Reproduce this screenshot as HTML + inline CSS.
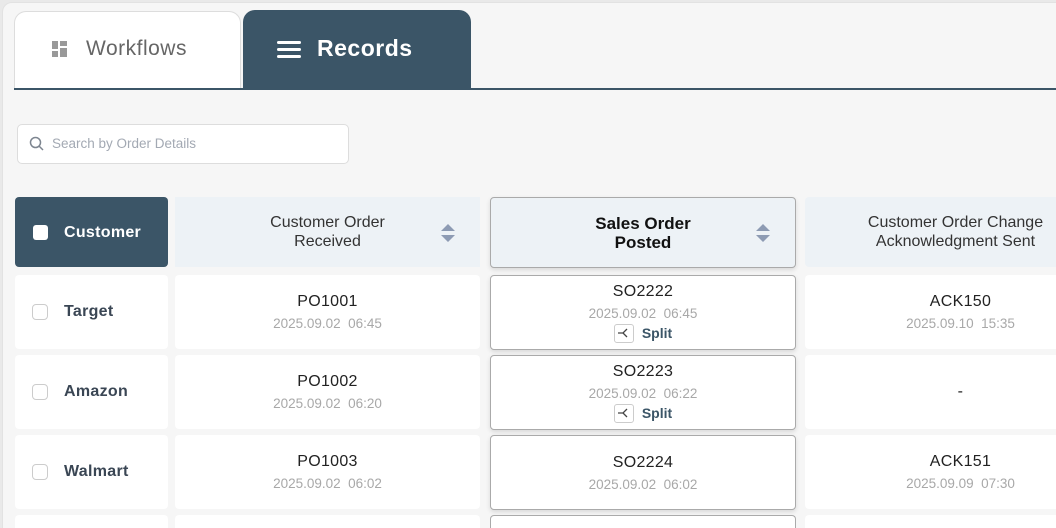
<!DOCTYPE html><html><head><style>
*{box-sizing:border-box;margin:0;padding:0}
html,body{width:1056px;height:528px;overflow:hidden}
body{background:#e9e9e9;font-family:"Liberation Sans",sans-serif;position:relative}
.frame{position:absolute;left:2px;top:2px;width:1054px;height:526px;background:#f6f6f6;border-radius:10px 0 0 0;border:1px solid #e2e2e2;border-right:none;border-bottom:none}
.abs{position:absolute}
.c{display:flex;flex-direction:column;align-items:center;justify-content:center;text-align:center}
.cell{background:#fff;border-radius:4px}
.hd{background:#edf2f6}
.id{font-size:16px;color:#222;letter-spacing:.3px}
.dt{font-size:13.5px;color:#a8a8a8;margin-top:5px}
.so{background:#fff;border:1px solid #aaa;border-radius:4px;box-shadow:0 2px 5px rgba(0,0,0,.12)}
.name{font-size:16px;font-weight:bold;color:#3a4654;letter-spacing:.3px}
.cb{width:16px;height:16px;border:1px solid #ccc;border-radius:4px;background:#fff}
.split{display:flex;align-items:center;gap:8px;margin-top:3px;font-size:14px;font-weight:bold;color:#3b5567}
.si{width:20px;height:19px;border:1px solid #ccc;border-radius:3px;display:flex;align-items:center;justify-content:center}
</style></head><body>
<div class="frame"></div>
<div class="abs" style="left:14px;top:11px;width:227px;height:78px;background:#fff;border:1px solid #ddd;border-bottom:none;border-radius:12px 12px 0 0"></div>
<div class="abs" style="left:52px;top:41px;width:16px;height:16px">
<div class="abs" style="left:0;top:0;width:6px;height:8px;background:#999"></div><div class="abs" style="left:8px;top:0;width:7px;height:5px;background:#999"></div><div class="abs" style="left:0;top:10px;width:6px;height:6px;background:#999"></div><div class="abs" style="left:8px;top:7px;width:7px;height:9px;background:#999"></div></div>
<div class="abs" style="left:86px;top:37px;font-size:21px;color:#666;letter-spacing:.5px">Workflows</div>
<div class="abs" style="left:243px;top:10px;width:228px;height:79px;background:#3b5567;border-radius:12px 12px 0 0"></div>
<div class="abs" style="left:277px;top:41px;width:24px;height:3px;background:#fff;border-radius:2px"></div>
<div class="abs" style="left:277px;top:48px;width:24px;height:3px;background:#fff;border-radius:2px"></div>
<div class="abs" style="left:277px;top:55px;width:24px;height:3px;background:#fff;border-radius:2px"></div>
<div class="abs" style="left:317px;top:35px;font-size:23px;font-weight:bold;color:#fff;letter-spacing:.5px">Records</div>
<div class="abs" style="left:14px;top:88px;width:1042px;height:2px;background:#3b5567"></div>
<div class="abs" style="left:17px;top:124px;width:332px;height:40px;background:#fff;border:1px solid #ddd;border-radius:5px"></div>
<svg class="abs" style="left:29px;top:136px" width="16" height="16" viewBox="0 0 16 16"><circle cx="6.5" cy="6.5" r="5" fill="none" stroke="#7d8590" stroke-width="1.5"/><path d="M10 10l4 4" stroke="#7d8590" stroke-width="1.5"/></svg>
<div class="abs" style="left:52px;top:136px;font-size:13.5px;color:#a3a9b3">Search by Order Details</div>

<div class="abs" style="left:15px;top:197px;width:153px;height:70px;background:#3b5567;border-radius:4px"></div>
<div class="abs" style="left:33px;top:225px;width:15px;height:15px;background:#fff;border-radius:3px"></div>
<div class="abs" style="left:64px;top:224px;font-size:16px;font-weight:bold;color:#fff;letter-spacing:.3px">Customer</div>
<div class="abs hd c" style="left:175px;top:197px;width:305px;height:70px;font-size:16px;color:#333;line-height:19px">Customer Order<br>Received</div>
<div class="abs so c" style="left:490px;top:197px;width:306px;height:71px;background:#edf2f6;font-size:17px;font-weight:bold;color:#111;line-height:19px">Sales Order<br>Posted</div>
<div class="abs hd c" style="left:805px;top:197px;width:251px;height:70px;font-size:16px;color:#333;line-height:19px;padding-left:50px;border-radius:4px 0 0 4px;white-space:nowrap">Customer Order Change<br>Acknowledgment Sent</div>
<svg class="abs" style="left:441px;top:224px" width="14" height="18"><path d="M7 0L14 7H0Z M7 18L14 11H0Z" fill="#8d9bb3"/></svg>
<svg class="abs" style="left:756px;top:224px" width="14" height="18"><path d="M7 0L14 7H0Z M7 18L14 11H0Z" fill="#8d9bb3"/></svg>

<div class="abs cell" style="left:15px;top:275px;width:153px;height:74px"></div>
<div class="abs cb" style="left:32px;top:304px"></div><div class="abs name" style="left:64px;top:303px">Target</div>
<div class="abs cell c" style="left:175px;top:275px;width:305px;height:74px"><div class="id">PO1001</div><div class="dt">2025.09.02&nbsp; 06:45</div></div>
<div class="abs so c" style="left:490px;top:275px;width:306px;height:75px"><div class="id">SO2222</div><div class="dt">2025.09.02&nbsp; 06:45</div><div class="split"><div class="si"><svg width="14" height="12"><path d="M1 6h5l4-4M6 6l4 4" fill="none" stroke="#444" stroke-width="1.3"/></svg></div>Split</div></div>
<div class="abs cell c" style="left:805px;top:275px;width:251px;height:74px;padding-left:60px;border-radius:4px 0 0 4px"><div class="id">ACK150</div><div class="dt">2025.09.10&nbsp; 15:35</div></div>

<div class="abs cell" style="left:15px;top:355px;width:153px;height:74px"></div>
<div class="abs cb" style="left:32px;top:384px"></div><div class="abs name" style="left:64px;top:383px">Amazon</div>
<div class="abs cell c" style="left:175px;top:355px;width:305px;height:74px"><div class="id">PO1002</div><div class="dt">2025.09.02&nbsp; 06:20</div></div>
<div class="abs so c" style="left:490px;top:355px;width:306px;height:75px"><div class="id">SO2223</div><div class="dt">2025.09.02&nbsp; 06:22</div><div class="split"><div class="si"><svg width="14" height="12"><path d="M1 6h5l4-4M6 6l4 4" fill="none" stroke="#444" stroke-width="1.3"/></svg></div>Split</div></div>
<div class="abs cell c" style="left:805px;top:355px;width:251px;height:74px;padding-left:60px;border-radius:4px 0 0 4px"><div class="id">-</div></div>

<div class="abs cell" style="left:15px;top:435px;width:153px;height:74px"></div>
<div class="abs cb" style="left:32px;top:464px"></div><div class="abs name" style="left:64px;top:463px">Walmart</div>
<div class="abs cell c" style="left:175px;top:435px;width:305px;height:74px"><div class="id">PO1003</div><div class="dt">2025.09.02&nbsp; 06:02</div></div>
<div class="abs so c" style="left:490px;top:435px;width:306px;height:75px"><div class="id">SO2224</div><div class="dt">2025.09.02&nbsp; 06:02</div></div>
<div class="abs cell c" style="left:805px;top:435px;width:251px;height:74px;padding-left:60px;border-radius:4px 0 0 4px"><div class="id">ACK151</div><div class="dt">2025.09.09&nbsp; 07:30</div></div>

<div class="abs cell" style="left:15px;top:515px;width:153px;height:13px;border-radius:4px 4px 0 0"></div>
<div class="abs cell" style="left:175px;top:515px;width:305px;height:13px;border-radius:4px 4px 0 0"></div>
<div class="abs" style="left:490px;top:515px;width:306px;height:13px;background:#fff;border:1px solid #aaa;border-bottom:none;border-radius:4px 4px 0 0"></div>
<div class="abs cell" style="left:805px;top:515px;width:251px;height:13px;border-radius:4px 0 0 0"></div>
</body></html>
